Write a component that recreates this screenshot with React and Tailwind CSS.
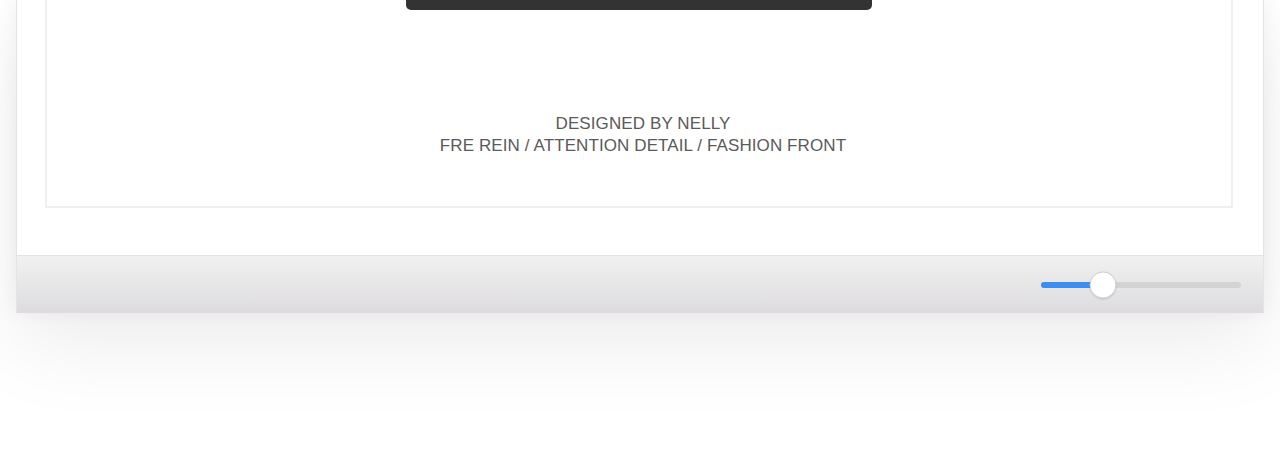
function Slider({ value }) {
  return (
    <div className="relative h-[6px] w-[200px] rounded-full bg-[#d3d3d3]">
      <div className="h-full rounded-full bg-[#3a8ef2]" style={{ width: `${value}%` }} />
      <div
        className="absolute top-1/2 h-[27px] w-[27px] -translate-x-1/2 -translate-y-1/2 rounded-full border border-[#cfcfcf] bg-white shadow-[0_1px_2px_rgba(0,0,0,0.12)]"
        style={{ left: `${value}%` }}
      />
    </div>
  );
}

export default function App() {
  return (
    <div className="h-[451px] overflow-hidden bg-white px-4 font-['Liberation_Sans',Arial,sans-serif]">
      <div className="border-x border-[#e4e4e4] bg-white shadow-[0_30px_80px_rgba(0,0,0,0.08),0_0_18px_rgba(0,0,0,0.05)]">
        <div className="pl-[28px] pr-[30px]">
          <div className="flex h-[208px] flex-col items-center border-x-2 border-b-2 border-[#efefef]">
            <div className="h-[10px] w-[466px] rounded-b-[5px] bg-[#333333]" />
            <div className="mt-[103px] pl-2 text-center text-[17px] leading-[22px] tracking-[0.1px] text-[#5a5a5a]">
              <p>DESIGNED BY NELLY</p>
              <p>FRE REIN / ATTENTION DETAIL / FASHION FRONT</p>
            </div>
          </div>
        </div>
        <div className="h-[47px]" />
        <div className="flex h-[58px] items-center justify-end border-t border-[#e3e3e3] bg-gradient-to-b from-[#f1f1f1] to-[#dddbde] pr-[22px]">
          <Slider value={31} />
        </div>
      </div>
    </div>
  );
}
